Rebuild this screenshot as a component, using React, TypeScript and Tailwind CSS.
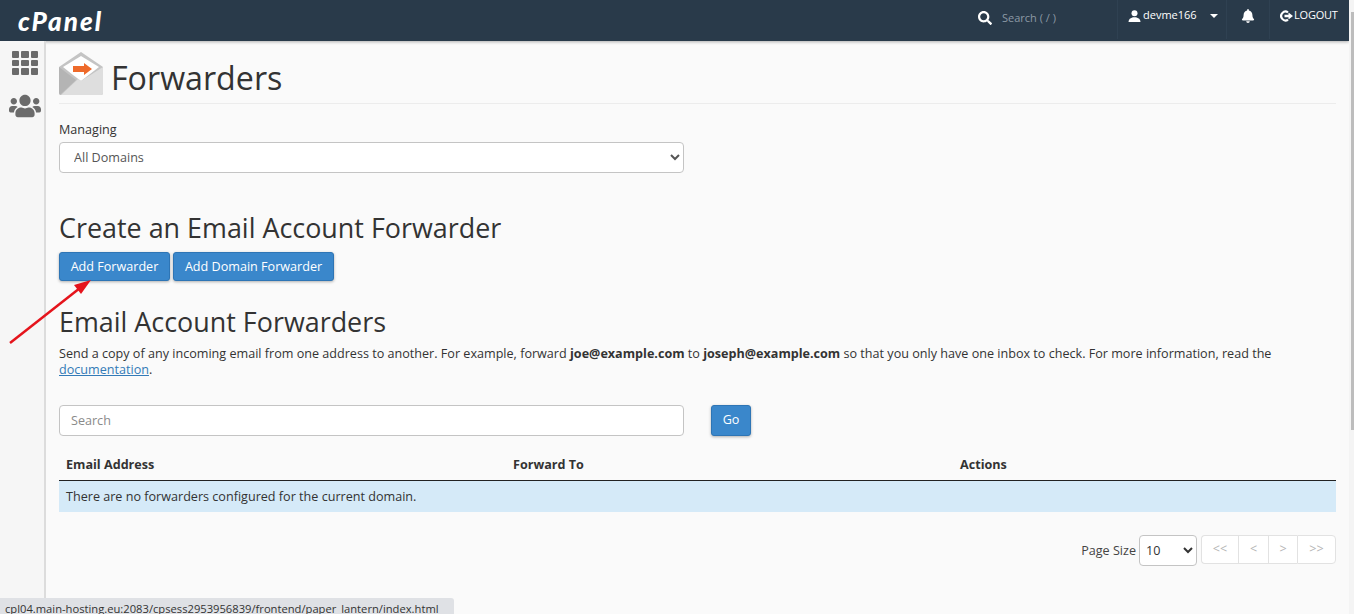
import { FaBell, FaSearch, FaUsers } from 'react-icons/fa'

function EnvelopeIcon() {
  return (
    <svg width="44" height="44" viewBox="0 0 44 44">
      <path d="M0 15 L22 0 L44 15 L44 41 Q44 43 42 43 L2 43 Q0 43 0 41 Z" fill="#c4c4c4" />
      <path d="M4 15 L22 4 L40 15 L22 29 L14 23 Z" fill="#ffffff" />
      <path d="M0 15 L17 28 L1 43 L0 41 Z" fill="#b4b4b4" />
      <path d="M2 43 L19 27 L22 29 L44 15 L44 41 Q44 43 42 43 Z" fill="#dedede" />
      <path d="M14 14 H25 V11 L33 17 L25 23 V20 H14 Z" fill="#ee6a2b" />
    </svg>
  )
}

function UserIcon() {
  return (
    <svg width="13" height="12" viewBox="0 0 13 12" fill="#ffffff">
      <circle cx="6.5" cy="3.2" r="3" />
      <path d="M0.5 12 C0.5 9 2.5 8 5 7.2 H8 C10.5 8 12.5 9 12.5 12 Z" />
    </svg>
  )
}

function LogoutIcon() {
  return (
    <svg width="13" height="12" viewBox="0 0 13 12">
      <path d="M8 2.3 A4.4 4.4 0 1 0 8 9.7" fill="none" stroke="#ffffff" strokeWidth="2.2" />
      <path d="M4.5 4.8 H8.5 V2.5 L13 6 L8.5 9.5 V7.2 H4.5 Z" fill="#ffffff" />
    </svg>
  )
}

function AppsGrid() {
  return (
    <div className="grid w-[26px] grid-cols-3 gap-[2px]">
      {[0, 1, 2, 3, 4, 5, 6, 7, 8].map((i) => (
        <div key={i} className="h-[6.5px] rounded-[1px] bg-[#6b6b6b]" />
      ))}
    </div>
  )
}

function PageButton({ label, width, className }: { label: string; width: string; className: string }) {
  return (
    <div className={`flex h-[29px] items-center justify-center border border-[#e2e2e2] bg-white text-[12.6px] text-[#b5b5b5] ${width} ${className}`}>
      {label}
    </div>
  )
}

export default function App() {
  return (
    <div className="relative flex h-[614px] w-[1354px] overflow-hidden bg-[#fafafa] font-['Open_Sans',sans-serif] text-[#333333]">
      <div className="w-[1349px] shrink-0">
        {/* Top bar */}
        <header className="flex h-[41px] items-center justify-between bg-[#293a4a] pr-[10px] shadow-[0_1px_3px_rgba(0,0,0,0.3)]">
          <div className="pl-[18px] font-['Lato',sans-serif] text-[26px] font-black italic leading-none tracking-[2px] text-white">
            cPanel
          </div>
          <div className="flex h-full items-center pb-[5px]">
            <div className="flex w-[139px] items-center gap-[10px] text-[#8c99a5]">
              <FaSearch className="text-[14px] text-white" />
              <span className="text-[11px]">Search ( / )</span>
            </div>
            <div className="flex h-[41px] w-[109px] items-center gap-[2px] border-l border-[#2f4152] pb-[5px] pl-[10px] text-[11px] font-medium text-white">
              <UserIcon />
              <span>devme166</span>
              <span className="ml-[11px] h-0 w-0 border-x-[4px] border-t-[4px] border-x-transparent border-t-white" />
            </div>
            <div className="flex h-[41px] w-[44px] items-center justify-center border-x border-[#2f4152] pb-[5px] text-white">
              <FaBell className="text-[14px]" />
            </div>
            <div className="flex h-[41px] w-[69px] items-center gap-[1px] pb-[5px] pl-[10px] text-[11px] font-medium tracking-[-0.2px] text-white">
              <LogoutIcon />
              <span>LOGOUT</span>
            </div>
          </div>
        </header>

        <div className="flex h-[573px]">
          {/* Side rail */}
          <aside className="flex w-[46px] shrink-0 flex-col items-center border-r-[2px] border-[#dcdcdc] bg-[#f6f6f6] pl-[6px] pt-[10px]">
            <AppsGrid />
            <FaUsers className="mt-[15px] text-[32px] text-[#6b6b6b]" />
          </aside>

          {/* Page content */}
          <main className="w-[1290px] pl-[13px]">
            <div className="flex h-[63px] items-end gap-[8px] border-b border-[#ececec] pb-[1px]">
              <div className="mb-[6px]">
                <EnvelopeIcon />
              </div>
              <h1 className="mb-[2px] text-[32.2px] leading-[44px] text-[#333333]">Forwarders</h1>
            </div>

            <div className="mt-[17px] text-[12.6px] leading-[18px]">Managing</div>
            <select className="mt-[3px] block h-[31px] w-[625px] rounded-[4px] border border-[#c4c4c4] bg-white pl-[10px] pr-[2px] text-[12.6px] text-[#555555]">
              <option>All Domains</option>
            </select>

            <h2 className="mt-[37px] text-[26.9px] leading-[36px]">Create an Email Account Forwarder</h2>
            <div className="mt-[6px] flex gap-[3px]">
              <button className="h-[29px] w-[111px] rounded-[3px] border border-[#2e75b5] bg-[#3a87cb] pt-[1px] text-[12.6px] text-white shadow-[0_1px_3px_rgba(0,0,0,0.3)]">
                Add Forwarder
              </button>
              <button className="h-[29px] w-[161px] rounded-[3px] border border-[#2e75b5] bg-[#3a87cb] pt-[1px] text-[12.6px] text-white shadow-[0_1px_3px_rgba(0,0,0,0.3)]">
                Add Domain Forwarder
              </button>
            </div>

            <h2 className="mt-[23px] text-[26.9px] leading-[36px]">Email Account Forwarders</h2>
            <p className="mt-[6px] w-[1277px] text-[12.6px] leading-[16px]">
              Send a copy of any incoming email from one address to another. For example, forward{' '}
              <strong className="font-bold">joe@example.com</strong> to <strong className="font-bold">joseph@example.com</strong>{' '}
              so that you only have one inbox to check. For more information, read the{' '}
              <span className="text-[#337ab7] underline">documentation</span>.
            </p>

            <div className="mt-[27px] flex items-center gap-[27px]">
              <input
                placeholder="Search"
                className="h-[31px] w-[625px] rounded-[4px] border border-[#c4c4c4] bg-white pl-[11px] text-[12.6px] placeholder:text-[#8a8a8a]"
              />
              <button className="h-[31px] w-[40px] rounded-[3px] border border-[#2e75b5] bg-[#3a87cb] text-[12.6px] text-white shadow-[0_1px_3px_rgba(0,0,0,0.3)]">
                Go
              </button>
            </div>

            {/* Forwarders table */}
            <div className="mt-[13px] w-[1277px]">
              <div className="grid h-[32px] grid-cols-[447px_447px_1fr] items-center border-b border-[#222222] pl-[7px] pt-[2px] text-[12.6px] font-bold leading-none">
                <span>Email Address</span>
                <span>Forward To</span>
                <span>Actions</span>
              </div>
              <div className="flex h-[31px] items-center bg-[#d5eaf8] pl-[7px] pt-[1px] text-[12.6px]">
                There are no forwarders configured for the current domain.
              </div>
            </div>

            <div className="mt-[23px] flex w-[1277px] items-start justify-end">
              <span className="mt-[7px] text-[12.6px] text-[#444444]">Page Size</span>
              <select className="ml-[3px] h-[31px] w-[58px] rounded-[4px] border border-[#c4c4c4] bg-white pl-[2px] text-[12.6px]">
                <option>10</option>
              </select>
              <div className="ml-[4px] flex">
                <PageButton label="<<" width="w-[37px]" className="rounded-l-[4px] border-r-0" />
                <PageButton label="<" width="w-[30px]" className="border-r-0" />
                <PageButton label=">" width="w-[29px]" className="border-r-0" />
                <PageButton label=">>" width="w-[39px]" className="rounded-r-[4px]" />
              </div>
            </div>
          </main>
        </div>
      </div>

      {/* Scrollbar */}
      <div className="flex-1 bg-[#f4f4f4] pl-[2px] pt-[12px]">
        <div className="h-[418px] bg-[#bdbdbd]" />
      </div>

      {/* Browser status bubble */}
      <div className="absolute bottom-0 left-0 h-[16px] w-[454px] overflow-hidden whitespace-nowrap rounded-tr-[3px] bg-[#dfe1e5] pl-[5px] text-[11.2px] leading-[22px] text-[#333333]">
        cpl04.main-hosting.eu:2083/cpsess2953956839/frontend/paper_lantern/index.html
      </div>

      {/* Annotation arrow */}
      <svg className="pointer-events-none absolute left-0 top-0" width="100" height="350" viewBox="0 0 100 350">
        <line x1="10" y1="343" x2="80" y2="288" stroke="#e5141c" strokeWidth="2.5" />
        <path d="M91 280 L74 285 L81 294 Z" fill="#e5141c" />
      </svg>
    </div>
  )
}
